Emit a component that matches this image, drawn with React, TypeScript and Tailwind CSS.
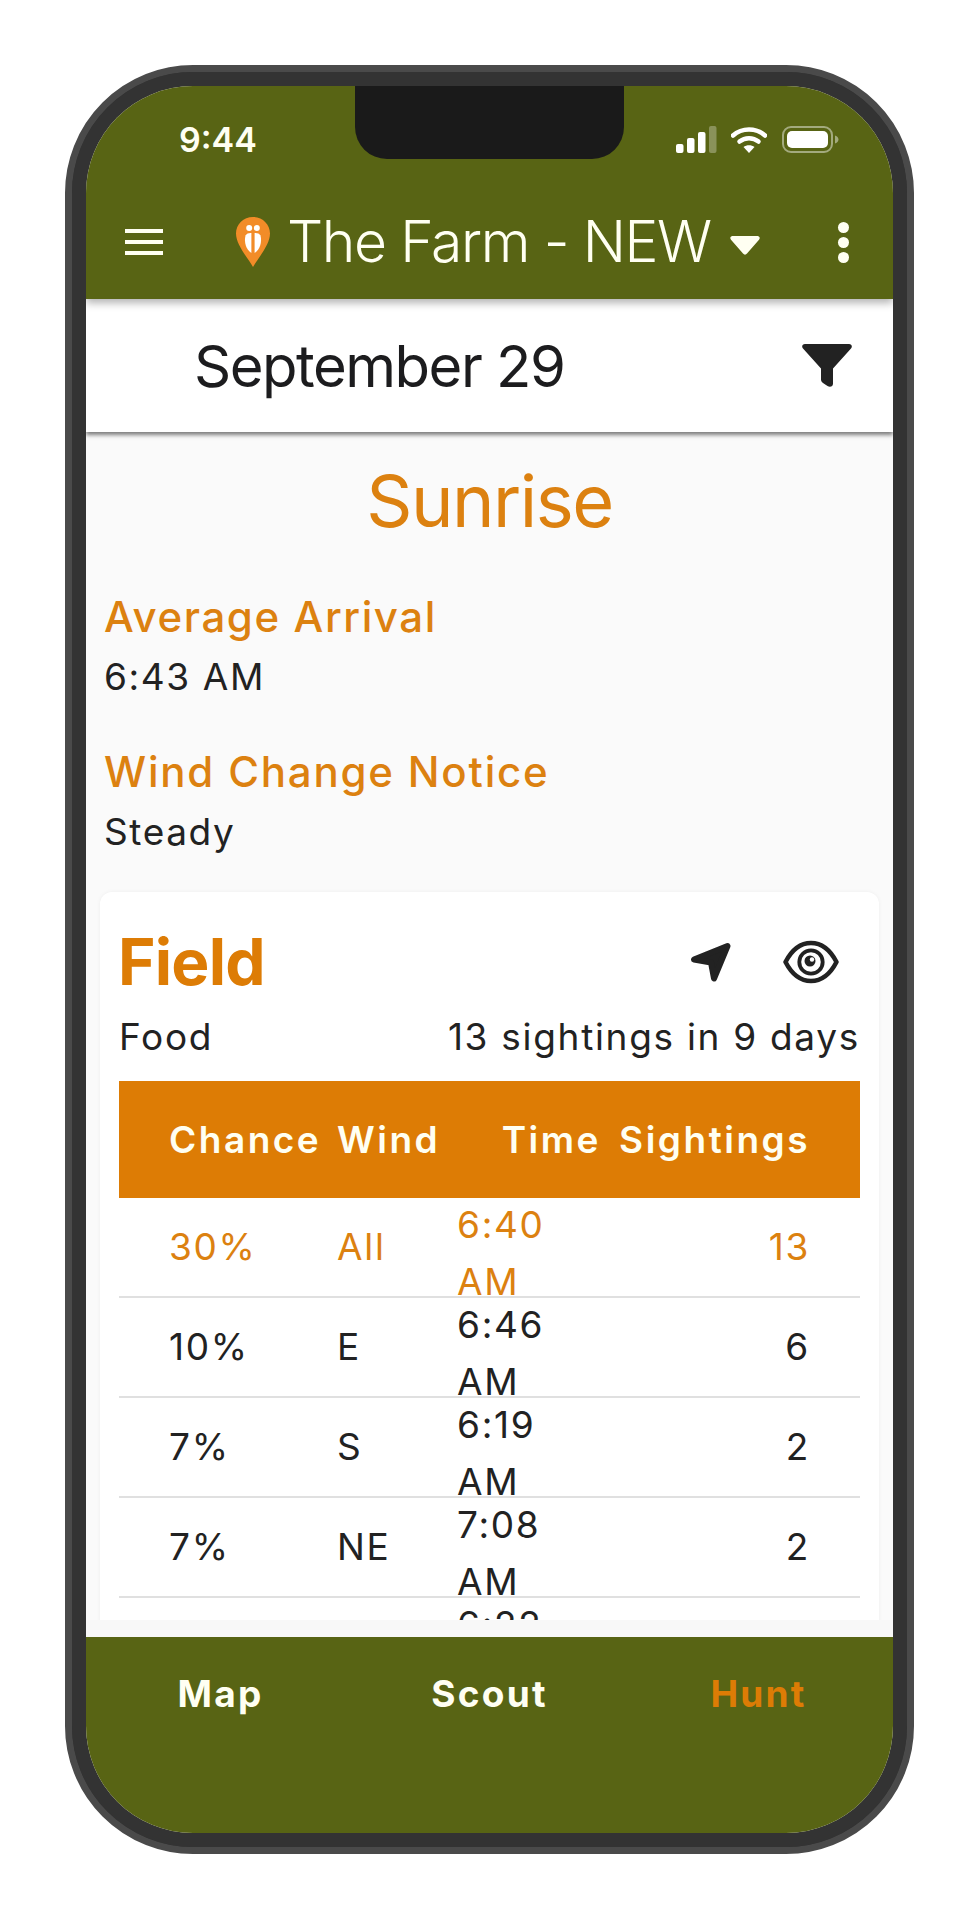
import React from 'react'

const rows = [
  { chance: '10%', wind: 'E', time: '6:46 AM', count: '6' },
  { chance: '7%', wind: 'S', time: '6:19 AM', count: '2' },
  { chance: '7%', wind: 'NE', time: '7:08 AM', count: '2' },
  { chance: '', wind: '', time: '6:22 AM', count: '' },
]

const StatusIcons = () => (
  <div className="flex items-center">
    <svg width="41" height="27" viewBox="0 0 41 27" className="mr-[14px]">
      <rect x="0" y="18" width="7.5" height="9" rx="2" fill="#fff" />
      <rect x="11" y="12" width="7.5" height="15" rx="2" fill="#fff" />
      <rect x="22" y="6" width="7.5" height="21" rx="2" fill="#fff" />
      <rect x="33" y="0" width="7.5" height="27" rx="2" fill="#fff" fillOpacity="0.3" />
    </svg>
    <svg width="36" height="27" viewBox="0 0 36 27" className="mr-[15px]">
      <path d="M2 9.5C11 1.5 25 1.5 34 9.5" fill="none" stroke="#fff" strokeWidth="4.5" strokeLinecap="round" />
      <path d="M8.5 15.5C14 11 22 11 27.5 15.5" fill="none" stroke="#fff" strokeWidth="4.5" strokeLinecap="round" />
      <path d="M18 27L12.5 21C15.5 18.5 20.5 18.5 23.5 21Z" fill="#fff" />
    </svg>
    <svg width="57" height="27" viewBox="0 0 57 27">
      <rect x="1" y="1" width="49" height="25" rx="8" fill="none" stroke="#fff" strokeOpacity="0.45" strokeWidth="2" />
      <rect x="5" y="5" width="41" height="17" rx="5" fill="#fff" />
      <path d="M53 9.5C55.5 10.5 56.5 12 56.5 13.5C56.5 15 55.5 16.5 53 17.5Z" fill="#fff" fillOpacity="0.45" />
    </svg>
  </div>
)

const Pin = () => (
  <svg width="34" height="50" viewBox="0 0 34 50">
    <path d="M17 0C7.5 0 0 7.4 0 16.6C0 28 12 41 17 50C22 41 34 28 34 16.6C34 7.4 26.5 0 17 0Z" fill="#f28c28" />
    <circle cx="13.2" cy="11" r="3" fill="#fff" />
    <circle cx="20.8" cy="11" r="3" fill="#fff" />
    <path d="M15.4 16V36C10 32.5 7.8 25 9.5 18.5C10.5 16.5 13 15.8 15.4 16Z" fill="#fff" />
    <path d="M18.6 16V36C24 32.5 26.2 25 24.5 18.5C23.5 16.5 21 15.8 18.6 16Z" fill="#fff" />
  </svg>
)

const NavArrow = () => (
  <svg width="42" height="40" viewBox="0 0 42 40">
    <path d="M4 17.5L37.5 4L24 36.5L21 20.5Z" fill="#222" stroke="#222" strokeWidth="6" strokeLinejoin="round" />
  </svg>
)

const Eye = () => (
  <svg width="56" height="44" viewBox="0 0 56 44">
    <path d="M2.5 22C9 9.5 18 3 28 3C38 3 47 9.5 53.5 22C47 34.5 38 41 28 41C18 41 9 34.5 2.5 22Z" fill="none" stroke="#222" strokeWidth="4.5" strokeLinejoin="round" />
    <circle cx="28" cy="22" r="11.7" fill="none" stroke="#222" strokeWidth="3.8" />
    <circle cx="27" cy="21" r="5.5" fill="#222" />
    <circle cx="29" cy="19.5" r="2.2" fill="#fff" />
  </svg>
)

export default function App() {
  return (
    <div className="min-h-[1920px] bg-white pl-[65px] pt-[65px] font-['Inter',sans-serif]">
      <div className="h-[1789px] w-[849px] rounded-[128px] bg-[#333] border-[7px] border-[#4a4a4a]">
        <div className="h-full w-full rounded-[121px] bg-[#333] p-[14px]">
          <div className="relative flex h-full flex-col overflow-hidden rounded-[107px] bg-[#fafafa]">
            <div className="absolute left-[269px] top-0 z-30 h-[73px] w-[269px] rounded-b-[32px] bg-[#1a1a1a]" />

            <header className="z-20 h-[213px] shrink-0 bg-[#586414] shadow-[0_4px_8px_rgba(0,0,0,0.3)]">
              <div className="flex h-[106px] items-start justify-between pl-[93px] pr-[54px] pt-[27px]">
                <span className="text-[34px] font-semibold leading-[54px] text-[#fffff2]">9:44</span>
                <div className="pt-[13px]">
                  <StatusIcons />
                </div>
              </div>
              <div className="flex h-[77px] items-center pl-[39px] pr-[44px] pt-[23px]">
                <div className="flex w-[38px] flex-col gap-[7px]">
                  <div className="h-[4px] bg-[#fffff2]" />
                  <div className="h-[4px] bg-[#fffff2]" />
                  <div className="h-[4px] bg-[#fffff2]" />
                </div>
                <div className="ml-[73px] flex items-center">
                  <Pin />
                </div>
                <span className="ml-[17px] whitespace-nowrap text-[57px] font-light leading-[70px] tracking-[-1.4px] text-[#fffff2]">The Farm - NEW</span>
                <svg width="30" height="19" viewBox="0 0 30 19" className="ml-[19px] mt-[6px]">
                  <path d="M2.5 0H27.5C29.5 0 30.5 2.2 29 3.7L17 17.5C15.8 19 14.2 19 13 17.5L1 3.7C-0.5 2.2 0.5 0 2.5 0Z" fill="#fffff2" />
                </svg>
                <div className="ml-auto flex flex-col gap-[4px]">
                  <div className="h-[11px] w-[11px] rounded-full bg-[#fffff2]" />
                  <div className="h-[11px] w-[11px] rounded-full bg-[#fffff2]" />
                  <div className="h-[11px] w-[11px] rounded-full bg-[#fffff2]" />
                </div>
              </div>
            </header>

            <div className="z-10 flex h-[133px] shrink-0 items-center justify-between bg-white pl-[108px] pr-[41px] shadow-[0_3px_4px_rgba(0,0,0,0.5)]">
              <span className="text-[58px] font-normal leading-[70px] tracking-[-1.5px] text-[#1c1c1e]">September 29</span>
              <svg width="50" height="43" viewBox="0 0 50 43">
                <path d="M3 0H47C49.5 0 50.8 2.5 49 4.5L31 24.5V39.5C31 42.5 28 43.8 25.5 42L21 39C19.8 38.2 19 37 19 35.5V24.5L1 4.5C-0.8 2.5 0.5 0 3 0Z" fill="#222" />
              </svg>
            </div>

            <main className="h-[1188px] shrink-0 overflow-hidden">
              <h1 className="mt-[27px] text-center text-[72px] font-normal leading-[84px] tracking-[-1.5px] text-[#dc8110]">Sunrise</h1>
              <div className="px-[18px]">
                <h2 className="mt-[48px] text-[42px] font-medium leading-[52px] tracking-[1.6px] text-[#dc8110]">Average Arrival</h2>
                <p className="mt-[8px] text-[37px] leading-[52px] tracking-[1.6px] text-[#222]">6:43 AM</p>
                <h2 className="mt-[43px] text-[42px] font-medium leading-[52px] tracking-[1.8px] text-[#dc8110]">Wind Change Notice</h2>
                <p className="mt-[8px] text-[37px] leading-[52px] tracking-[1.6px] text-[#222]">Steady</p>
              </div>
              <section className="mx-[14px] mt-[34px] h-[800px] rounded-[12px] bg-white px-[19px] pt-[35px] shadow-[0_0_4px_rgba(0,0,0,0.05)]">
                <div className="flex h-[70px] items-center justify-between">
                  <h3 className="-ml-[1px] text-[64px] font-bold leading-[70px] tracking-[-0.8px] text-[#dd7c05]">Field</h3>
                  <div className="flex items-center gap-[51px] pr-[21px]">
                    <NavArrow />
                    <Eye />
                  </div>
                </div>
                <div className="mt-[15px] flex h-[50px] items-center justify-between text-[37px] tracking-[1.7px] text-[#222]">
                  <span>Food</span>
                  <span>13 sightings in 9 days</span>
                </div>
                <div className="mt-[19px] grid h-[117px] grid-cols-[168px_120px_162px_191px] items-center bg-[#dd7c05] px-[50px] text-[37px] font-semibold tracking-[2.5px] text-[#fffff2]">
                  <span>Chance</span>
                  <span>Wind</span>
                  <span className="pr-[18px] text-right">Time</span>
                  <span className="text-right">Sightings</span>
                </div>
                <div className="grid h-[100px] grid-cols-[168px_120px_162px_191px] grid-rows-[98px] items-center border-b-2 border-[#e0e0e0] px-[50px] text-[37px] tracking-[1.7px] text-[#dc8110]">
                  <span>30%</span>
                  <span>All</span>
                  <span className="w-[120px] pt-[12px] leading-[57px]">6:40 AM</span>
                  <span className="text-right">13</span>
                </div>
                {rows.map((r) => (
                  <div key={r.time} className="grid h-[100px] grid-cols-[168px_120px_162px_191px] grid-rows-[98px] items-center border-b-2 border-[#e0e0e0] px-[50px] text-[37px] tracking-[1.7px] text-[#222]">
                    <span>{r.chance}</span>
                    <span>{r.wind}</span>
                    <span className="w-[120px] pt-[12px] leading-[57px]">{r.time}</span>
                    <span className="text-right">{r.count}</span>
                  </div>
                ))}
              </section>
            </main>
            <div className="h-[17px] shrink-0 bg-[#f8f8f8]" />

            <nav className="grid h-[196px] shrink-0 grid-cols-3 bg-[#586414] pt-[32px] text-center text-[37px] font-bold leading-[50px] tracking-[2.2px] text-[#fffff2]">
              <span>Map</span>
              <span>Scout</span>
              <span className="text-[#dd7c05]">Hunt</span>
            </nav>
          </div>
        </div>
      </div>
    </div>
  )
}
